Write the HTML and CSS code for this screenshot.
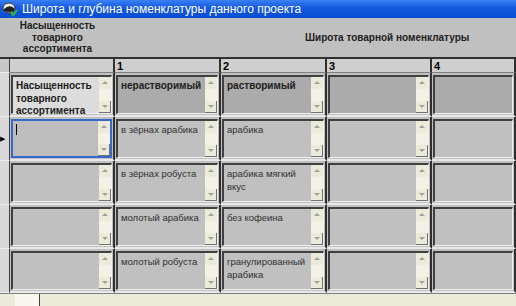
FILE: index.html
```html
<!DOCTYPE html>
<html lang="ru">
<head>
  <meta charset="UTF-8">
  <title>Широта и глубина номенклатуры данного проекта</title>
  <link rel="stylesheet" href="styles.css">
</head>
<body>
  <div class="window">
    <div class="titlebar">
      <svg class="app-icon" width="16" height="16" viewBox="0 0 16 16">
        <ellipse cx="7" cy="7" rx="6" ry="5" fill="#f0f0f0" stroke="#303030"/>
        <path d="M2 8 Q7 3 12 7 L12 10 Q7 12 2 10 Z" fill="#202020"/>
        <path d="M9 11 L11 14 L15 9" fill="none" stroke="#30c030" stroke-width="2"/>
      </svg>
      <span class="title">Широта и глубина номенклатуры данного проекта</span>
    </div>

    <div class="form-head">
      <div class="head-left">Насыщенность<br>товарного<br>ассортимента</div>
      <div class="head-right">Широта товарной номенклатуры</div>
    </div>

    <div class="grid">
      <div class="sel sel-head"></div>
      <div class="colnum"></div>
      <div class="colnum">1</div>
      <div class="colnum">2</div>
      <div class="colnum">3</div>
      <div class="colnum">4</div>

      <div class="sel"></div>
      <div class="cell"><div class="box light bold"><div class="txt">Насыщенность товарного ассортимента</div><div class="sb"><span class="up"></span><span class="dn"></span></div></div></div>
      <div class="cell"><div class="box dark bold"><div class="txt">нерастворимый</div><div class="sb"><span class="up"></span><span class="dn"></span></div></div></div>
      <div class="cell"><div class="box dark bold"><div class="txt">растворимый</div><div class="sb"><span class="up"></span><span class="dn"></span></div></div></div>
      <div class="cell"><div class="box dark"><div class="txt"></div><div class="sb"><span class="up"></span><span class="dn"></span></div></div></div>
      <div class="cell"><div class="box dark"><div class="txt"></div></div></div>

      <div class="sel current">&#9654;</div>
      <div class="cell"><div class="box focus"><div class="txt"><span class="caret"></span></div><div class="sb"><span class="up"></span><span class="dn"></span></div></div></div>
      <div class="cell"><div class="box"><div class="txt">в зёрнах арабика</div><div class="sb"><span class="up"></span><span class="dn"></span></div></div></div>
      <div class="cell"><div class="box"><div class="txt">арабика</div><div class="sb"><span class="up"></span><span class="dn"></span></div></div></div>
      <div class="cell"><div class="box"><div class="txt"></div><div class="sb"><span class="up"></span><span class="dn"></span></div></div></div>
      <div class="cell"><div class="box"><div class="txt"></div></div></div>

      <div class="sel"></div>
      <div class="cell"><div class="box"><div class="txt"></div><div class="sb"><span class="up"></span><span class="dn"></span></div></div></div>
      <div class="cell"><div class="box"><div class="txt">в зёрнах робуста</div><div class="sb"><span class="up"></span><span class="dn"></span></div></div></div>
      <div class="cell"><div class="box"><div class="txt">арабика мягкий вкус</div><div class="sb"><span class="up"></span><span class="dn"></span></div></div></div>
      <div class="cell"><div class="box"><div class="txt"></div><div class="sb"><span class="up"></span><span class="dn"></span></div></div></div>
      <div class="cell"><div class="box"><div class="txt"></div></div></div>

      <div class="sel"></div>
      <div class="cell"><div class="box"><div class="txt"></div><div class="sb"><span class="up"></span><span class="dn"></span></div></div></div>
      <div class="cell"><div class="box"><div class="txt">молотый арабика</div><div class="sb"><span class="up"></span><span class="dn"></span></div></div></div>
      <div class="cell"><div class="box"><div class="txt">без кофеина</div><div class="sb"><span class="up"></span><span class="dn"></span></div></div></div>
      <div class="cell"><div class="box"><div class="txt"></div><div class="sb"><span class="up"></span><span class="dn"></span></div></div></div>
      <div class="cell"><div class="box"><div class="txt"></div></div></div>

      <div class="sel"></div>
      <div class="cell"><div class="box"><div class="txt"></div><div class="sb"><span class="up"></span><span class="dn"></span></div></div></div>
      <div class="cell"><div class="box"><div class="txt">молотый робуста</div><div class="sb"><span class="up"></span><span class="dn"></span></div></div></div>
      <div class="cell"><div class="box"><div class="txt">гранулированный арабика</div><div class="sb"><span class="up"></span><span class="dn"></span></div></div></div>
      <div class="cell"><div class="box"><div class="txt"></div><div class="sb"><span class="up"></span><span class="dn"></span></div></div></div>
      <div class="cell"><div class="box"><div class="txt"></div></div></div>
    </div>

    <div class="footer">
      <div class="nav"></div>
    </div>
  </div>
</body>
</html>
```

FILE: styles.css
```css
body {
  margin: 0;
  font-family: "Liberation Sans", Arial, sans-serif;
  background: #c0c0c0;
}
.window {
  width: 516px;
  height: 306px;
  overflow: hidden;
  background: #c0c0c0;
  display: flex;
  flex-direction: column;
}
.titlebar {
  height: 18px;
  flex: none;
  display: flex;
  align-items: center;
  gap: 4px;
  padding-left: 2px;
  background: linear-gradient(#3a80f4, #1258e0 45%, #0a4ed0);
  color: white;
}
.app-icon {
  flex: none;
}
.title {
  font-size: 12px;
}
.form-head {
  height: 39px;
  flex: none;
  display: flex;
  border-bottom: 2px solid #303030;
  font-weight: bold;
  font-size: 10px;
  color: #202020;
}
.head-left {
  width: 115px;
  text-align: center;
  line-height: 11.5px;
  padding-top: 2px;
}
.head-right {
  padding-left: 190px;
  padding-top: 14px;
}
.grid {
  display: grid;
  grid-template-columns: 10px 105px 106px 106px 105px 1fr;
  grid-template-rows: 14px repeat(5, 44px);
}
.sel {
  background: #d8d8d8;
  border-right: 1px solid #404040;
  border-bottom: 1px solid #f0f0f0;
  font-size: 7px;
  color: #000;
  display: flex;
  align-items: center;
}
.sel-head {
  background: #c8c8c8;
}
.colnum {
  background: #cfcfcf;
  border-right: 2px solid #303030;
  border-bottom: 1px solid #808080;
  font-weight: bold;
  font-size: 11px;
  padding-left: 2px;
  line-height: 14px;
}
.cell {
  border-right: 2px solid #303030;
  border-bottom: 2px solid #e8e8e8;
  padding: 2px 1px 1px 1px;
  background: #c0c0c0;
}
.box {
  height: 100%;
  box-sizing: border-box;
  display: flex;
  background: #c0c0c0;
  border-top: 2px solid #404040;
  border-left: 2px solid #404040;
  border-right: 1px solid #f0f0f0;
  border-bottom: 1px solid #f0f0f0;
  font-size: 9.5px;
  color: #303030;
}
.box.light {
  background: #dcdcdc;
}
.box.dark {
  background: #ababab;
}
.box.bold {
  font-weight: bold;
  font-size: 10px;
  color: #202020;
}
.box.focus {
  border: 2px solid #3868c8;
  background: #bdbdbd;
}
.txt {
  flex: 1;
  padding: 3px 3px 0 3px;
  line-height: 12.5px;
}
.caret {
  display: inline-block;
  width: 1px;
  height: 11px;
  background: #000;
}
.sb {
  width: 12px;
  flex: none;
  display: flex;
  flex-direction: column;
  justify-content: space-between;
  background: #f4f2e6;
}
.up,
.dn {
  height: 12px;
  background: #ecead8;
  position: relative;
}
.dn {
  border-right: 1px solid #707070;
  border-bottom: 1px solid #707070;
  box-sizing: border-box;
}
.up::after,
.dn::after {
  content: "";
  position: absolute;
  left: 3px;
  top: 4px;
  border-left: 3px solid transparent;
  border-right: 3px solid transparent;
}
.up::after {
  border-bottom: 3px solid #a0a0a0;
}
.dn::after {
  border-top: 3px solid #a0a0a0;
}
.footer {
  flex: 1;
  background: #ecead8;
  border-top: 1px solid #808080;
  padding-left: 15px;
}
.nav {
  width: 24px;
  height: 100%;
  background: #f8f8f0;
  border-right: 1px solid #404040;
}
```
